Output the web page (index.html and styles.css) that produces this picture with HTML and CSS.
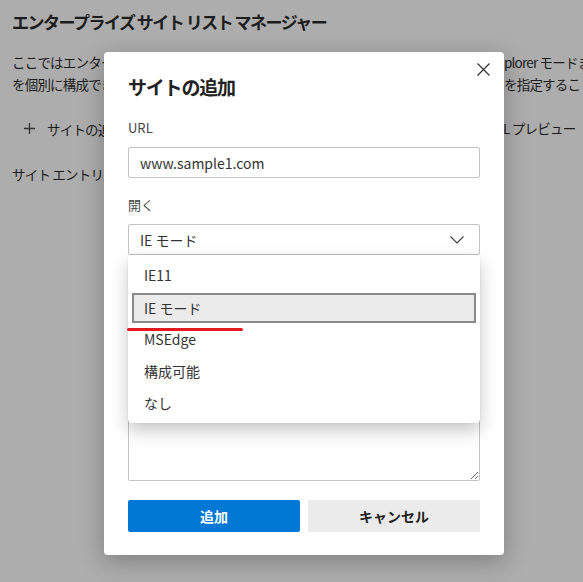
FILE: index.html
```html
<!DOCTYPE html>
<html lang="ja">
<head>
<meta charset="utf-8">
<link rel="stylesheet" href="styles.css">
</head>
<body>
<div class="page">
  <h1 class="page-title">エンタープライズ サイト リスト マネージャー</h1>
  <div class="intro">
    <div class="line"><span class="clip">ここではエンタープライズ サイト一覧を作成し、サイトを Internet Ex</span><span>plorer モードま</span></div>
    <div class="line"><span class="clip">を個別に構成できます。サイトごとにエンジン</span><span>を指定するこ</span></div>
  </div>
  <div class="actions">
    <span class="clip-act"><span class="add-link"><svg class="plus" width="11" height="11" viewBox="0 0 11 11"><path d="M5.5 0v11M0 5.5h11" stroke="#333" stroke-width="1.3"/></svg>サイトの追加</span></span><span>XML プレビュー</span>
  </div>
  <p class="empty">サイト エントリはありません。</p>
</div>

<div class="modal">
  <button class="close" aria-label="閉じる"><svg width="13" height="13" viewBox="0 0 13 13"><path d="M0.5 0.5l12 12M12.5 0.5l-12 12" stroke="#333" stroke-width="1.2"/></svg></button>
  <h2 class="modal-title">サイトの追加</h2>
  <label class="field-label">URL</label>
  <div class="input">www.sample1.com</div>
  <label class="field-label">開く</label>
  <div class="select"><span>IE モード</span><svg width="14" height="8" viewBox="0 0 14 8"><path d="M0.5 0.5l6.5 6.5 6.5-6.5" fill="none" stroke="#444" stroke-width="1.2"/></svg></div>
  <textarea class="textarea" aria-label="コメント"></textarea>
  <div class="buttons">
    <button class="btn primary">追加</button>
    <button class="btn secondary">キャンセル</button>
  </div>

  <ul class="dropdown">
    <li class="item">IE11</li>
    <li class="item selected">IE モード</li>
    <li class="item">MSEdge</li>
    <li class="item">構成可能</li>
    <li class="item">なし</li>
  </ul>
  <div class="annotation"></div>
</div>
</body>
</html>
```

FILE: styles.css
```css
* { box-sizing: border-box; }
html, body { margin: 0; padding: 0; }
body {
  width: 583px;
  height: 582px;
  overflow: hidden;
  position: relative;
  background: #adadad;
  font-family: "Noto Sans CJK JP", "Noto Sans", sans-serif;
  color: #1c1c1c;
}
.page { padding: 10px 12px; }
.page-title {
  margin: 0;
  font-size: 17px;
  line-height: 24px;
  font-weight: 700;
  letter-spacing: -1.5px;
}
.intro {
  margin-top: 17px;
  font-size: 13.5px;
  line-height: 22px;
  letter-spacing: -0.8px;
}
.line { display: flex; white-space: nowrap; }
.clip { width: 492px; flex: none; overflow: hidden; }
.actions {
  margin-top: 22px;
  display: flex;
  white-space: nowrap;
  font-size: 13.5px;
  line-height: 22px;
  letter-spacing: -0.8px;
}
.clip-act { width: 474px; flex: none; overflow: hidden; }
.add-link { display: inline-flex; align-items: center; padding-left: 12px; }
.plus { margin-right: 12px; }
.empty {
  margin: 23px 0 0;
  font-size: 13.5px;
  line-height: 22px;
  letter-spacing: -0.8px;
}

.modal {
  position: absolute;
  left: 104px;
  top: 52px;
  width: 400px;
  height: 503px;
  background: #fff;
  border-radius: 4px;
  box-shadow: 0 6px 24px rgba(0,0,0,0.28);
  padding: 21px 24px 23px;
  display: flex;
  flex-direction: column;
}
.close {
  position: absolute;
  right: 14px;
  top: 11px;
  border: 0;
  background: none;
  padding: 0;
  width: 13px;
  height: 13px;
  display: flex;
}
.modal-title {
  margin: 0;
  font-size: 19px;
  line-height: 28px;
  font-weight: 700;
  letter-spacing: -1.2px;
  color: #222;
}
.field-label {
  display: block;
  font-size: 13px;
  line-height: 20px;
  color: #444;
  margin-top: 17px;
}
.field-label + .input, .field-label + .select { margin-top: 9px; }
.input, .select {
  height: 31px;
  border: 1px solid #c4c4c4;
  border-radius: 2px;
  padding: 0 11px;
  display: flex;
  align-items: center;
  font-size: 14px;
  color: #333;
}
.select { justify-content: space-between; padding-right: 15px; }
.textarea {
  margin-top: 46px;
  height: 180px;
  border: 1px solid #c4c4c4;
  border-radius: 2px;
  resize: vertical;
  font: inherit;
}
.buttons {
  margin-top: 19px;
  display: grid;
  grid-template-columns: 1fr 1fr;
  gap: 8px;
}
.btn {
  height: 32px;
  border: 0;
  border-radius: 2px;
  font-family: inherit;
  font-size: 14px;
  font-weight: 700;
}
.primary { background: #0078d4; color: #fff; }
.secondary { background: #ebebeb; color: #222; }

.dropdown {
  position: absolute;
  left: 24px;
  top: 203px;
  width: 352px;
  margin: 0;
  padding: 4px 0;
  list-style: none;
  background: #fff;
  border-radius: 4px;
  box-shadow: 0 8px 18px rgba(0,0,0,0.22), 0 0 3px rgba(0,0,0,0.08);
}
.item {
  height: 32px;
  padding-left: 16px;
  display: flex;
  align-items: center;
  font-size: 14px;
  color: #333;
}
.item.selected {
  height: 30px;
  margin: 2px 4px 0;
  padding-left: 10px;
  border: 2px solid #8a8a8a;
  background: #ebebeb;
}
.annotation {
  position: absolute;
  left: 23px;
  top: 276px;
  width: 116px;
  height: 3px;
  border-radius: 2px;
  background: #e3191f;
}
```
